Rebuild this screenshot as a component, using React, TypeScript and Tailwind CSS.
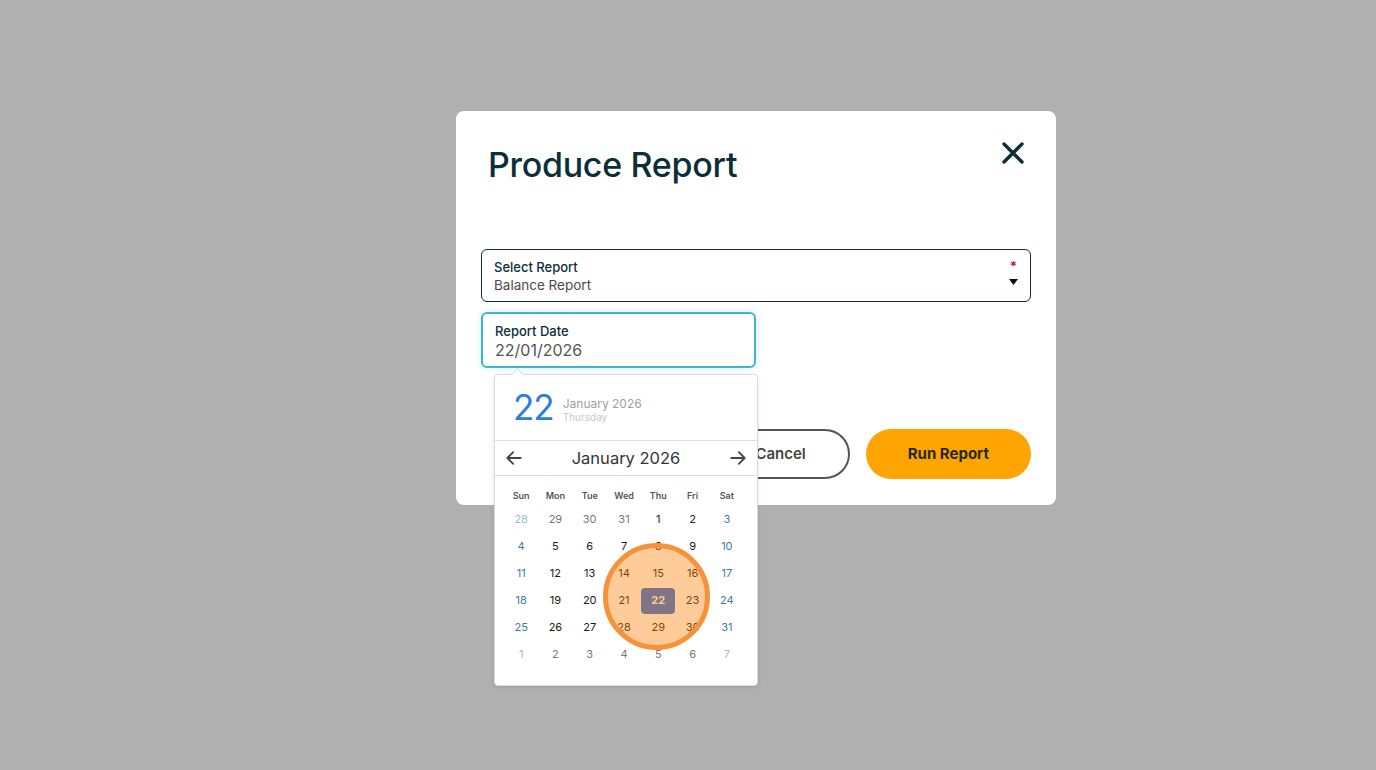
import React from "react";

type Day = { n: number; cur: boolean; wk: boolean };

const rows: Day[][] = (() => {
  const out: Day[][] = [];
  const all: { n: number; cur: boolean }[] = [];
  [28, 29, 30, 31].forEach((n) => all.push({ n, cur: false }));
  for (let i = 1; i <= 31; i++) all.push({ n: i, cur: true });
  for (let i = 1; i <= 7; i++) all.push({ n: i, cur: false });
  for (let r = 0; r < 6; r++) {
    out.push(
      all.slice(r * 7, r * 7 + 7).map((d, i) => ({ ...d, wk: i === 0 || i === 6 }))
    );
  }
  return out;
})();

function dayColor(d: Day) {
  if (d.wk) return d.cur ? "text-[#3f7d96]" : "text-[#9dbdcb]";
  return d.cur ? "text-[#1a1a1a]" : "text-[#777777]";
}

function Calendar() {
  return (
    <div className="absolute left-[38px] top-[263px] w-[264px] h-[312px] bg-white border border-[#dcdcdc] rounded-[4px] shadow-[0_1px_4px_rgba(0,0,0,0.12)]">
      <div className="absolute -top-[5px] left-[18px] w-[9px] h-[9px] bg-white border-l border-t border-[#dcdcdc] rotate-45" />
      <div className="relative h-[66px] flex items-center pl-[18px] border-b border-[#dedede]">
        <span className="text-[35px] leading-none text-[#2a7de1] tracking-[-1px]">22</span>
        <div className="ml-[9px] flex flex-col mt-[4px]">
          <span className="text-[12px] leading-[15px] text-[#9e9e9e]">January 2026</span>
          <span className="text-[10px] leading-[13px] text-[#c6c6c6]">Thursday</span>
        </div>
      </div>
      <div className="h-[35px] flex items-center justify-between px-[9px] border-b border-[#dedede]">
        <svg width="20" height="20" viewBox="0 0 24 24" fill="none" stroke="#444" strokeWidth="2.2" strokeLinecap="round" strokeLinejoin="round">
          <path d="M20 12H4M11 5l-7 7 7 7" />
        </svg>
        <span className="text-[16.5px] text-[#333]">January 2026</span>
        <svg width="20" height="20" viewBox="0 0 24 24" fill="none" stroke="#444" strokeWidth="2.2" strokeLinecap="round" strokeLinejoin="round">
          <path d="M4 12h16M13 5l7 7-7 7" />
        </svg>
      </div>
      <div className="ml-[9px] w-[240px] pt-[9px]">
        <div className="grid grid-cols-7 h-[21px] items-center">
          {["Sun", "Mon", "Tue", "Wed", "Thu", "Fri", "Sat"].map((d) => (
            <div key={d} className="text-center text-[9px] font-semibold text-[#555]">
              {d}
            </div>
          ))}
        </div>
        {rows.map((r, ri) => (
          <div key={ri} className="grid grid-cols-7 h-[27px] items-center">
            {r.map((d, i) => {
              const sel = d.cur && d.n === 22;
              return (
                <div key={i} className="flex justify-center">
                  {sel ? (
                    <div className="w-[34px] h-[26px] rounded-[4px] bg-[#2b6fdc] text-white font-bold text-[11px] flex items-center justify-center">
                      22
                    </div>
                  ) : (
                    <span className={`text-[11px] ${dayColor(d)}`}>{d.n}</span>
                  )}
                </div>
              );
            })}
          </div>
        ))}
      </div>
      <div className="absolute left-[108px] top-[168px] w-[107px] h-[107px] rounded-full border-[5px] border-[#f7923a] bg-[rgba(255,128,0,0.4)]" />
    </div>
  );
}

export default function App() {
  return (
    <div className="w-full h-[770px] bg-[#b0b0b0] pt-[111px] pl-[456px] font-['Inter','Noto_Sans',sans-serif]">
      <div className="relative w-[600px] h-[394px] bg-white rounded-[8px] px-[25px]">
        <div className="flex justify-between items-start pt-[34px] pl-[7px] pr-[6px]">
          <h1 className="text-[34px] leading-[40px] font-medium text-[#0c2e39] tracking-[-0.3px]">Produce Report</h1>
          <svg width="22" height="22" viewBox="0 0 22 22" className="-mt-[3px] mr-[1px]" fill="none" stroke="#0c2e39" strokeWidth="3.4" strokeLinecap="round">
            <path d="M2 2L20 20M20 2L2 20" />
          </svg>
        </div>
        <div className="mt-[64px] h-[53px] border border-[#0c2e39] rounded-[6px] flex justify-between pl-[12px] pr-[12px] pt-[8px]">
          <div className="flex flex-col">
            <span className="text-[13px] leading-[18px] font-medium text-[#0c2e39]">Select Report</span>
            <span className="text-[13.5px] leading-[18px] text-[#4a4a4a]">Balance Report</span>
          </div>
          <div className="flex flex-col items-center">
            <span className="text-[13px] leading-[16px] text-[#d0103a] font-bold">*</span>
            <svg width="9" height="6" viewBox="0 0 9 6" className="mt-[5px]">
              <path d="M0 0h9L4.5 6z" fill="#111" />
            </svg>
          </div>
        </div>
        <div className="mt-[10px] w-[275px] h-[56px] border-2 border-[#40b6c9] rounded-[6px] pl-[12px] pt-[8px] flex flex-col shadow-[0_0_6px_rgba(64,182,201,0.25)]">
          <span className="text-[13px] leading-[18px] font-medium text-[#0c2e39]">Report Date</span>
          <span className="text-[16px] leading-[20px] text-[#555]">22/01/2026</span>
        </div>
        <div className="mt-[61px] flex justify-end gap-4">
          <button className="h-[50px] px-[42px] rounded-full border-2 border-[#555] text-[15px] font-semibold text-[#444]">
            Cancel
          </button>
          <button className="h-[50px] px-[42px] rounded-full bg-[#ffa400] text-[15px] font-bold text-[#1f2a1a]">
            Run Report
          </button>
        </div>
        <Calendar />
      </div>
    </div>
  );
}
